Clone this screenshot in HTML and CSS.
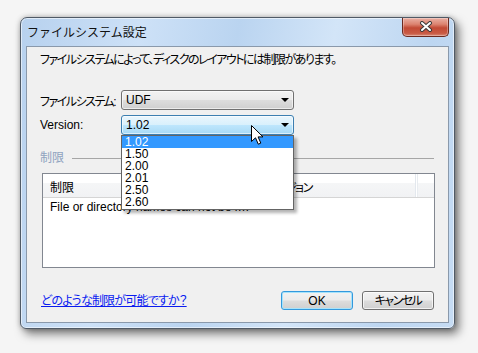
FILE: index.html
```html
<!DOCTYPE html>
<html lang="ja">
<head>
<meta charset="utf-8">
<title>ファイルシステム設定</title>
<link rel="stylesheet" href="styles.css">
</head>
<body>
<div class="window">
  <div class="titlebar">
    <span class="title">ファイルシステム設定</span>
    <div class="close">
      <svg width="14" height="11" viewBox="0 0 14 11">
        <path d="M3 2 L11 9 M11 2 L3 9" stroke="#3a3a3a" stroke-width="4" stroke-linecap="round"/>
        <path d="M3 2 L11 9 M11 2 L3 9" stroke="#ffffff" stroke-width="2" stroke-linecap="round"/>
      </svg>
    </div>
  </div>
  <div class="client">
    <p class="intro">ファイルシステムによって、ディスクのレイアウトには制限があります。</p>
    <div class="field first">
      <span class="label kana">ファイルシステム:</span>
      <div class="combo"><span class="value">UDF</span><i class="arrow"></i></div>
    </div>
    <div class="field">
      <span class="label">Version:</span>
      <div class="combo focus"><span class="value">1.02</span><i class="arrow"></i>
        <ul class="droplist">
          <li class="sel">1.02</li>
          <li>1.50</li>
          <li>2.00</li>
          <li>2.01</li>
          <li>2.50</li>
          <li>2.60</li>
        </ul>
      </div>
    </div>
    <div class="group"><span class="group-label">制限</span><span class="group-line"></span></div>
    <div class="listview">
      <div class="lv-head">
        <div class="col c1">制限</div>
        <div class="col c2 kana">バージョン</div>
        <div class="col c3"></div>
      </div>
      <div class="lv-row">
        <div class="col c1">File or directory names can not be longer than 255 characters</div>
        <div class="col c2"></div>
      </div>
    </div>
    <div class="footer">
      <a class="link" href="#">どのような制限が可能ですか？</a>
      <div class="buttons">
        <button class="btn default">OK</button>
        <button class="btn kana">キャンセル</button>
      </div>
    </div>
  </div>
</div>
<svg class="cursor" width="13" height="20" viewBox="0 0 13 20">
  <path d="M0.5 0.5 L0.5 16.5 L4.5 12.8 L7.3 19.2 L9.8 18.1 L7.1 11.9 L12 11.9 Z" fill="#ffffff" stroke="#000000" stroke-width="1" stroke-linejoin="miter"/>
</svg>
</body>
</html>
```
FILE: styles.css
```css
* { box-sizing: border-box; }
html, body { margin: 0; }
body {
  width: 478px;
  height: 353px;
  overflow: hidden;
  position: relative;
  background: #f5f5f5;
  padding: 17px 0 0 20px;
  font-family: "Liberation Sans", "Noto Sans CJK JP", sans-serif;
  font-size: 12px;
  font-feature-settings: "palt";
  color: #000;
}
.kana { letter-spacing: -1.5px; }
.window {
  width: 435px;
  height: 312px;
  border: 1px solid #505a66;
  border-radius: 7px 7px 6px 6px;
  background: linear-gradient(100deg, #b7d1ee 0%, #cde1f7 25%, #bad4f0 45%, #d3e5f8 65%, #bdd6f1 85%, #c6dcf4 100%);
  padding: 0 5px 5px;
  display: flex;
  flex-direction: column;
  box-shadow: inset 0 0 0 1px rgba(255,255,255,0.55), 4px 5px 10px rgba(0,0,0,0.5), 0 0 5px rgba(0,0,0,0.25);
}
.titlebar {
  height: 28px;
  display: flex;
  justify-content: space-between;
  align-items: flex-start;
}
.title {
  font-family: "Noto Sans CJK JP", sans-serif;
  font-feature-settings: normal;
  font-size: 12px;
  line-height: 16px;
  padding: 6px 0 0 1px;
  color: #111;
}
.close {
  width: 47px;
  height: 19px;
  border: 1px solid #6b2a20;
  border-top: none;
  border-radius: 0 0 5px 5px;
  background: linear-gradient(#eab0a4 0%, #dc8370 35%, #c24a35 55%, #c95a44 85%, #d98a78 100%);
  box-shadow: inset 0 0 0 1px rgba(255,255,255,0.3);
  display: flex;
  align-items: center;
  justify-content: center;
}
.close svg { display: block; margin-top: -1px; }
.client {
  flex: 1;
  border: 1px solid #8a99ab;
  background: #f0f0f0;
  padding: 6px 13px 0;
  display: flex;
  flex-direction: column;
}
.intro {
  margin: 0;
  line-height: 14px;
  white-space: nowrap;
  letter-spacing: -1.5px;
}
.field {
  display: flex;
  align-items: center;
  height: 20px;
  margin-top: 5px;
}
.field.first { margin-top: 23px; }
.label { width: 81px; flex: none; white-space: nowrap; }
.combo {
  position: relative;
  width: 173px;
  height: 20px;
  border: 1px solid #707070;
  border-radius: 3px;
  background: linear-gradient(#f2f2f2 0%, #ebebeb 49%, #dddddd 51%, #cfcfcf 100%);
  box-shadow: inset 0 0 0 1px rgba(255,255,255,0.6);
  display: flex;
  align-items: center;
  justify-content: space-between;
  padding: 0 4px 0 4px;
  line-height: 14px;
}
.combo.focus {
  border-color: #3c7fb1;
  background: linear-gradient(#eaf6fd 0%, #d9f0fc 49%, #bee6fd 51%, #a7d9f5 100%);
}
.arrow {
  width: 0;
  height: 0;
  border-left: 4px solid transparent;
  border-right: 4px solid transparent;
  border-top: 4px solid #000;
}
.droplist {
  position: absolute;
  left: -1px;
  top: calc(100% + 1px);
  width: 173px;
  margin: 0;
  padding: 0 0 1px;
  list-style: none;
  background: #fff;
  border: 1px solid #646464;
  box-shadow: 3px 3px 3px rgba(0,0,0,0.3);
  z-index: 5;
}
.droplist li {
  height: 12px;
  line-height: 12px;
  padding-left: 3px;
}
.droplist li.sel { background: #3399ff; color: #fff; }
.group {
  display: flex;
  align-items: center;
  height: 14px;
  margin-top: 16px;
}
.group-label { color: #8fa3bf; line-height: 14px; }
.group-line {
  flex: 1;
  height: 1px;
  background: #a6a6a6;
  margin: 1px 1px 0 8px;
}
.listview {
  margin: 8px 0 0 2px;
  height: 95px;
  border: 1px solid #828790;
  background: #fff;
}
.lv-head {
  display: flex;
  height: 24px;
  border-bottom: 1px solid #d5d5d5;
  background: linear-gradient(#ffffff 0%, #ffffff 40%, #f5f6f7 40%, #f1f2f4 100%);
}
.lv-head .col {
  padding-top: 7px;
  line-height: 14px;
}
.col { flex: none; white-space: nowrap; overflow: hidden; }
.c1 { width: 215px; padding-left: 7px; text-overflow: ellipsis; padding-right: 6px; }
.c2 { width: 158px; padding-left: 7px; }
.lv-head .c2 { border-right: 1px solid #e3e8ee; box-shadow: 1px 0 0 #ffffff, 2px 0 0 #e8ecf0; }
.c3 { flex: 1; }
.lv-row {
  display: flex;
  height: 18px;
  line-height: 18px;
}
.footer {
  margin-top: 23px;
  display: flex;
  align-items: center;
  justify-content: space-between;
  height: 19px;
}
.link {
  color: #0a1cf0;
  text-decoration: underline;
  margin-left: 1px;
  line-height: 14px;
  letter-spacing: -0.8px;
}
.buttons { display: flex; gap: 9px; margin-right: 1px; }
.btn {
  width: 72px;
  height: 19px;
  padding: 0;
  font: inherit;
  font-feature-settings: "palt";
  line-height: 14px;
  color: #000;
  border: 1px solid #707070;
  border-radius: 3px;
  background: linear-gradient(#f2f2f2 0%, #ebebeb 49%, #dddddd 51%, #cfcfcf 100%);
  box-shadow: inset 0 0 0 1px rgba(255,255,255,0.7);
}
.btn.kana { letter-spacing: -1.5px; }
.btn.default {
  border-color: #3399dd;
  box-shadow: inset 0 0 0 1px #a6e3fb;
}
.cursor {
  position: absolute;
  left: 251px;
  top: 125px;
  z-index: 10;
}
```
